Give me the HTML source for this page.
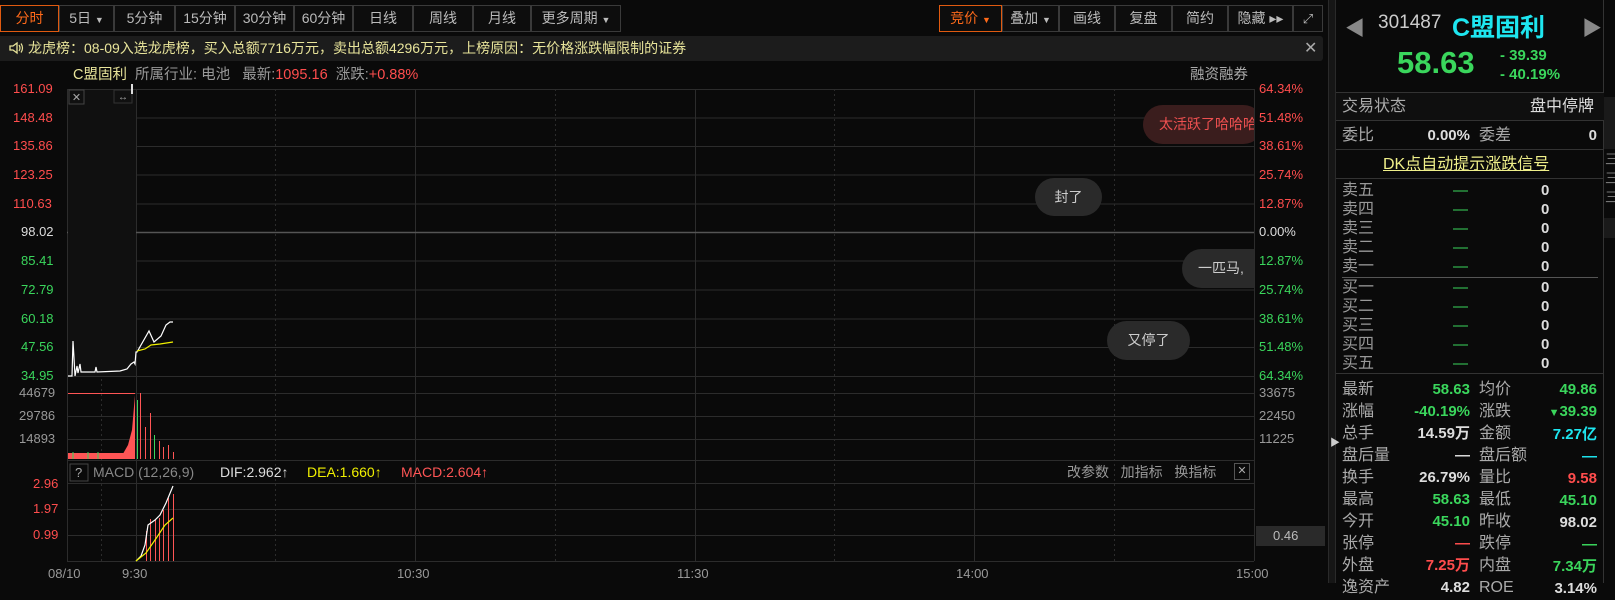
<!DOCTYPE html>
<html><head><meta charset="utf-8"><style>
*{margin:0;padding:0;box-sizing:border-box}
body{width:1615px;height:583px;background:#0a0a0a;overflow:hidden;position:relative;font-family:"Liberation Sans","Noto Sans CJK SC",sans-serif;color:#bbb}
.a{position:absolute;white-space:nowrap}
.btn{position:absolute;top:5px;height:27px;border:1px solid #3a3a3a;background:#0d0d0d;color:#bbb;font-size:14px;line-height:25px;text-align:center}
.r{color:#ff4d4d}.g{color:#3ad65c}.w{color:#ddd}.y{color:#f2f200}.c{color:#1ee6f0}
.lbl{position:absolute;font-size:16px;color:#aaa;line-height:20px}
.val{position:absolute;font-size:15px;font-weight:bold;text-align:right;line-height:20px}
.ax{position:absolute;font-size:13px;line-height:14px}
</style></head><body>
<!-- toolbar -->
<div class="btn" style="left:0;width:59px;border-color:#e05a10;color:#ff6a1a">分时</div>
<div class="btn" style="left:59px;width:55px">5日 <span style="font-size:9px">▼</span></div>
<div class="btn" style="left:114px;width:61px">5分钟</div>
<div class="btn" style="left:175px;width:60px">15分钟</div>
<div class="btn" style="left:235px;width:59px">30分钟</div>
<div class="btn" style="left:294px;width:59px">60分钟</div>
<div class="btn" style="left:353px;width:60px">日线</div>
<div class="btn" style="left:413px;width:60px">周线</div>
<div class="btn" style="left:473px;width:58px">月线</div>
<div class="btn" style="left:531px;width:90px">更多周期 <span style="font-size:9px">▼</span></div>
<div class="btn" style="left:939px;width:63px;border-color:#e05a10;color:#ff6a1a">竞价 <span style="font-size:9px">▼</span></div>
<div class="btn" style="left:1002px;width:57px">叠加 <span style="font-size:9px">▼</span></div>
<div class="btn" style="left:1059px;width:56px">画线</div>
<div class="btn" style="left:1115px;width:57px">复盘</div>
<div class="btn" style="left:1172px;width:56px">简约</div>
<div class="btn" style="left:1228px;width:65px">隐藏 ▸▸</div>
<div class="btn" style="left:1293px;width:30px;font-size:13px">⤢</div>
<!-- notice -->
<div class="a" style="left:0;top:36px;width:1323px;height:25px;background:#1c1c1c;border-radius:0 3px 3px 0"></div>
<svg class="a" style="left:8px;top:41px" width="16" height="14"><path d="M2 5H5L9 2V12L5 9H2Z" fill="none" stroke="#e8e49a" stroke-width="1.3"/><path d="M11 4Q13 7 11 10M13 2.5Q16 7 13 11.5" fill="none" stroke="#e8e49a" stroke-width="1.2"/></svg>
<div class="a" style="left:28px;top:38px;font-size:14px;color:#e8e49a;line-height:20px">龙虎榜：08-09入选龙虎榜，买入总额7716万元，卖出总额4296万元，上榜原因：无价格涨跌幅限制的证券</div>
<div class="a" style="left:1304px;top:38px;font-size:16px;color:#aaa">✕</div>
<!-- chart header -->
<div class="a" style="left:73px;top:66px;font-size:14.5px;line-height:18px"><span style="color:#e8e49a">C盟固利</span>&nbsp; <span style="color:#999">所属行业: 电池&nbsp;&nbsp; 最新:</span><span class="r">1095.16</span>&nbsp; <span style="color:#999">涨跌:</span><span class="r">+0.88%</span></div>
<div class="a" style="left:1190px;top:66px;font-size:14.5px;color:#aaa;line-height:18px">融资融券</div>
<svg class="a" style="left:0;top:0" width="1330" height="583">
<g stroke="#2c2c2c" stroke-width="1" fill="none">
<path d="M67.5 89V561M1254.5 89V561"/>
<path d="M67 89.5H1254M67 118H1254M67 146.5H1254M67 175H1254M67 204H1254M67 261H1254M67 290H1254M67 319H1254M67 347.5H1254M67 376.5H1254"/>
<path d="M67 393.5H1254M67 416.5H1254M67 439.5H1254M67 460.5H1254M67 483.5H1254M67 509.5H1254M67 535.5H1254M67 561.5H1254"/>
<path d="M136.5 89V561M415.5 89V561M695.5 89V561M974.5 89V561"/>
</g>
<path d="M67 232.5H1254" stroke="#555" stroke-width="1.5"/>
<g stroke="#2c2c2c" stroke-dasharray="2 3"><path d="M101.5 89V561M275.5 89V561M555.5 89V561M834.5 89V561M1114.5 89V561"/></g>
<rect x="68" y="90" width="68" height="286" fill="#101010"/>
<rect x="69" y="90" width="15" height="14" fill="none" stroke="#444"/>
<text x="76.5" y="101" fill="#aaa" font-size="11" text-anchor="middle">✕</text>
<rect x="114" y="90" width="18" height="13" fill="none" stroke="#333"/>
<text x="123" y="100" fill="#aaa" font-size="10" text-anchor="middle">↔</text>
<path d="M132 84V94" stroke="#ddd" stroke-width="2"/>
<polyline fill="none" stroke="#fff" stroke-width="1.2" points="68,376 72,376 73,341 74,358 75,376 77,366 78,373 80,364 81,372 95,372 96,367 97,372 120,371 127,369 131,364 134,362 135,364 136,352 137,352 149,331 154,342 161,336 166,325 170,322 173,322"/>
<polyline fill="none" stroke="#f0f000" stroke-width="1.2" points="137,351 145,349 151,345 160,344 173,342"/>
<path d="M68 393.5H135" stroke="#ff5555"/>
<path d="M68 459V453H135V459Z M120 459 L128 445 L132 430 L135 395 L135 459Z" fill="#ff5555"/>
<g stroke="#3ad65c"><path d="M73 459V452M88 459V452M98 459V452M137.5 459V400M154.5 459V435"/></g>
<g stroke="#ff5555"><path d="M140.5 459V393M145.5 459V427M150.5 459V413M159.5 459V441M163.5 459V447M168.5 459V445M173.5 459V452"/></g>
<rect x="70" y="464" width="18" height="17" fill="none" stroke="#444"/>
<g stroke="#ff5555"><path d="M146.5 561V531M150.5 561V519M155.5 561V520M159.5 561V518M163.5 561V510M168.5 561V498M173.5 561V494"/></g>
<polyline fill="none" stroke="#fff" stroke-width="1.2" points="136,561 141,556 145,545 148,525 155,520 160,515 166,503 173,486"/>
<polyline fill="none" stroke="#f0f000" stroke-width="1.2" points="136,561 146,553 155,540 165,525 173,518"/>
<rect x="1256" y="526" width="69" height="20" fill="#2a2a2a"/>
</svg>
<!-- bubbles -->
<div class="a" style="left:1143px;top:105px;width:120px;height:39px;border-radius:20px;background:#3a1d1d;color:#ee5050;font-size:14px;line-height:39px;padding-left:16px;clip-path:inset(0 9px 0 0)">太活跃了哈哈哈</div>
<div class="a" style="left:1035px;top:178px;width:67px;height:38px;border-radius:19px;background:#2a2a2a;color:#ccc;font-size:14px;line-height:38px;text-align:center">封了</div>
<div class="a" style="left:1182px;top:249px;width:90px;height:39px;border-radius:20px;background:#2a2a2a;color:#ccc;font-size:14px;line-height:39px;padding-left:16px;clip-path:inset(0 18px 0 0)">一匹马,</div>
<div class="a" style="left:1107px;top:321px;width:83px;height:39px;border-radius:20px;background:#2a2a2a;color:#ccc;font-size:14px;line-height:39px;text-align:center">又停了</div>
<!-- left axis -->
<div class="ax r" style="left:13px;top:82px">161.09</div>
<div class="ax r" style="left:13px;top:111px">148.48</div>
<div class="ax r" style="left:13px;top:139px">135.86</div>
<div class="ax r" style="left:13px;top:168px">123.25</div>
<div class="ax r" style="left:13px;top:197px">110.63</div>
<div class="ax w" style="left:21px;top:225px">98.02</div>
<div class="ax g" style="left:21px;top:254px">85.41</div>
<div class="ax g" style="left:21px;top:283px">72.79</div>
<div class="ax g" style="left:21px;top:312px">60.18</div>
<div class="ax g" style="left:21px;top:340px">47.56</div>
<div class="ax g" style="left:21px;top:369px">34.95</div>
<div class="ax" style="left:19px;top:386px;color:#999">44679</div>
<div class="ax" style="left:19px;top:409px;color:#999">29786</div>
<div class="ax" style="left:19px;top:432px;color:#999">14893</div>
<div class="ax r" style="left:33px;top:477px">2.96</div>
<div class="ax r" style="left:33px;top:502px">1.97</div>
<div class="ax r" style="left:33px;top:528px">0.99</div>
<!-- right axis -->
<div class="ax r" style="left:1259px;top:82px">64.34%</div>
<div class="ax r" style="left:1259px;top:111px">51.48%</div>
<div class="ax r" style="left:1259px;top:139px">38.61%</div>
<div class="ax r" style="left:1259px;top:168px">25.74%</div>
<div class="ax r" style="left:1259px;top:197px">12.87%</div>
<div class="ax w" style="left:1259px;top:225px">0.00%</div>
<div class="ax g" style="left:1259px;top:254px">12.87%</div>
<div class="ax g" style="left:1259px;top:283px">25.74%</div>
<div class="ax g" style="left:1259px;top:312px">38.61%</div>
<div class="ax g" style="left:1259px;top:340px">51.48%</div>
<div class="ax g" style="left:1259px;top:369px">64.34%</div>
<div class="ax" style="left:1259px;top:386px;color:#999">33675</div>
<div class="ax" style="left:1259px;top:409px;color:#999">22450</div>
<div class="ax" style="left:1259px;top:432px;color:#999">11225</div>
<div class="ax" style="left:1273px;top:529px;color:#bbb">0.46</div>
<!-- macd header -->
<div class="a" style="left:75px;top:464px;font-size:13px;color:#aaa;line-height:17px">?</div>
<div class="a" style="left:93px;top:464px;font-size:14px;color:#888;line-height:17px">MACD (12,26,9)</div>
<div class="a" style="left:220px;top:464px;font-size:14px;color:#ddd;line-height:17px">DIF:2.962↑</div>
<div class="a" style="left:307px;top:464px;font-size:14px;color:#f0f000;line-height:17px">DEA:1.660↑</div>
<div class="a" style="left:401px;top:464px;font-size:14px;color:#ff5555;line-height:17px">MACD:2.604↑</div>
<div class="a" style="left:1067px;top:464px;font-size:14px;color:#999;line-height:17px">改参数&nbsp;&nbsp; 加指标&nbsp;&nbsp; 换指标</div>
<div class="a" style="left:1234px;top:463px;width:16px;height:17px;border:1px solid #555;font-size:11px;color:#aaa;text-align:center;line-height:15px">✕</div>
<!-- time axis -->
<div class="ax" style="left:48px;top:567px;color:#999">08/10</div>
<div class="ax" style="left:122px;top:567px;color:#999">9:30</div>
<div class="ax" style="left:397px;top:567px;color:#999">10:30</div>
<div class="ax" style="left:677px;top:567px;color:#999">11:30</div>
<div class="ax" style="left:956px;top:567px;color:#999">14:00</div>
<div class="ax" style="left:1236px;top:567px;color:#999">15:00</div>
<!-- divider -->
<div class="a" style="left:1328px;top:0;width:8px;height:583px;background:#161616;border-left:1px solid #2a2a2a;border-right:1px solid #2a2a2a"></div>
<div class="a" style="left:1330px;top:434px;font-size:10px;color:#ccc">▶</div>
<!-- right panel -->
<div class="a" style="left:1336px;top:0;width:268px;height:583px;border-right:1px solid #333"></div>
<div class="a" style="left:1345px;top:12px;font-size:20px;color:#888">◀</div>
<div class="a" style="left:1378px;top:12px;font-size:19px;color:#ccc">301487</div>
<div class="a" style="left:1452px;top:8px;font-size:25px;color:#1ee6f0;font-weight:bold">C盟固利</div>
<div class="a" style="left:1582px;top:12px;font-size:20px;color:#888">▶</div>
<div class="a g" style="left:1397px;top:45px;font-size:31px;font-weight:bold">58.63</div>
<div class="a g" style="left:1500px;top:47px;font-size:15px;font-weight:bold">- 39.39</div>
<div class="a g" style="left:1500px;top:66px;font-size:15px;font-weight:bold">- 40.19%</div>
<div class="a" style="left:1336px;top:92px;width:268px;height:1px;background:#333"></div>
<div class="a" style="left:1336px;top:93px;width:268px;height:28px;background:#0f0f0f;border-bottom:1px solid #333"></div>
<div class="lbl" style="left:1342px;top:97px">交易状态</div>
<div class="lbl" style="left:1530px;top:97px;color:#ddd">盘中停牌</div>
<div class="lbl" style="left:1342px;top:126px">委比</div>
<div class="val w" style="left:1400px;top:126px;width:70px">0.00%</div>
<div class="lbl" style="left:1479px;top:126px">委差</div>
<div class="val w" style="left:1560px;top:126px;width:37px">0</div>
<div class="a" style="left:1336px;top:149px;width:268px;height:1px;background:#333"></div>
<div class="a" style="left:1383px;top:155px;font-size:16px;color:#f0f08a;text-decoration:underline;line-height:20px">DK点自动提示涨跌信号</div>
<div class="a" style="left:1336px;top:178px;width:268px;height:1px;background:#333"></div>
<div class="a" style="left:1342px;top:181px;font-size:16px;color:#999;line-height:19px">卖五<br>卖四<br>卖三<br>卖二<br>卖一</div>
<div class="a" style="left:1342px;top:278px;font-size:16px;color:#999;line-height:19px">买一<br>买二<br>买三<br>买四<br>买五</div>
<div class="a g" style="left:1453px;top:181px;font-size:15px;line-height:19px">—<br>—<br>—<br>—<br>—</div>
<div class="a g" style="left:1453px;top:278px;font-size:15px;line-height:19px">—<br>—<br>—<br>—<br>—</div>
<div class="a w" style="left:1541px;top:181px;font-size:15px;font-weight:bold;line-height:19px">0<br>0<br>0<br>0<br>0</div>
<div class="a w" style="left:1541px;top:278px;font-size:15px;font-weight:bold;line-height:19px">0<br>0<br>0<br>0<br>0</div>
<div class="a" style="left:1342px;top:277px;width:256px;height:1px;background:#555"></div>
<div class="a" style="left:1336px;top:373px;width:268px;height:1px;background:#333"></div>
<div class="a" style="left:1342px;top:379px;font-size:16px;color:#aaa;line-height:22px">最新<br>涨幅<br>总手<br>盘后量<br>换手<br>最高<br>今开<br>张停<br>外盘<br>逸资产</div>
<div class="a" style="left:1479px;top:379px;font-size:16px;color:#aaa;line-height:22px">均价<br>涨跌<br>金额<br>盘后额<br>量比<br>最低<br>昨收<br>跌停<br>内盘<br>ROE</div>
<div class="a" style="left:1380px;top:379px;width:90px;text-align:right;font-size:15px;font-weight:bold;line-height:22px"><span class="g">58.63</span><br><span class="g">-40.19%</span><br><span class="w">14.59万</span><br><span class="w">—</span><br><span class="w">26.79%</span><br><span class="g">58.63</span><br><span class="g">45.10</span><br><span class="r">—</span><br><span class="r">7.25万</span><br><span class="w">4.82</span></div>
<div class="a" style="left:1507px;top:379px;width:90px;text-align:right;font-size:15px;font-weight:bold;line-height:22px"><span class="g">49.86</span><br><span class="g"><span style="font-size:11px">▼</span>39.39</span><br><span class="c">7.27亿</span><br><span class="c">—</span><br><span class="r">9.58</span><br><span class="g">45.10</span><br><span class="w">98.02</span><br><span class="g">—</span><br><span class="g">7.34万</span><br><span class="w">3.14%</span></div>
<!-- extra column -->
<div class="a" style="left:1604px;top:97px;width:11px;height:52px;background:#1a1a1a"></div>
<div class="a" style="left:1605px;top:150px;font-size:14px;color:#777;line-height:19px">三<br>三<br>三</div>
<div class="a" style="left:1604px;top:218px;width:11px;height:20px;background:#1a1a1a"></div>
</body></html>
